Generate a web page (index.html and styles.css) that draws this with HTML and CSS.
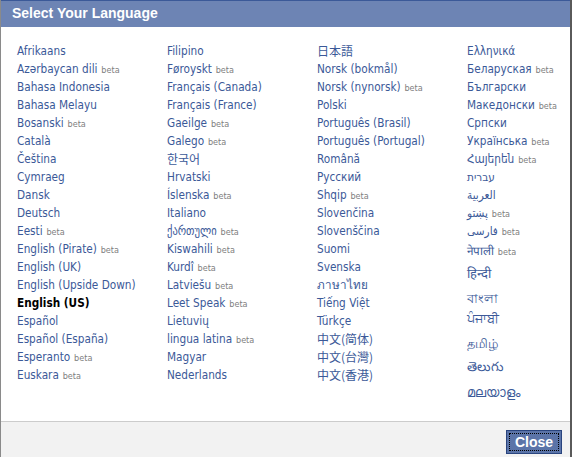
FILE: index.html
```html
<!DOCTYPE html>
<html lang="en">
<head>
    <meta charset="UTF-8">
    <title>Select Your Language</title>
    <link rel="stylesheet" href="styles.css">
</head>
<body>
    <div class="dialog">
        <div class="dialog-title">Select Your Language</div>

        <div class="dialog-body">
            <ul class="lang-col">
                <li><a href="#">Afrikaans</a></li>
                <li><a href="#">Azərbaycan dili</a> <span class="beta">beta</span></li>
                <li><a href="#">Bahasa Indonesia</a></li>
                <li><a href="#">Bahasa Melayu</a></li>
                <li><a href="#">Bosanski</a> <span class="beta">beta</span></li>
                <li><a href="#">Català</a></li>
                <li><a href="#">Čeština</a></li>
                <li><a href="#">Cymraeg</a></li>
                <li><a href="#">Dansk</a></li>
                <li><a href="#">Deutsch</a></li>
                <li><a href="#">Eesti</a> <span class="beta">beta</span></li>
                <li><a href="#">English (Pirate)</a> <span class="beta">beta</span></li>
                <li><a href="#">English (UK)</a></li>
                <li><a href="#">English (Upside Down)</a></li>
                <li class="current">English (US)</li>
                <li><a href="#">Español</a></li>
                <li><a href="#">Español (España)</a></li>
                <li><a href="#">Esperanto</a> <span class="beta">beta</span></li>
                <li><a href="#">Euskara</a> <span class="beta">beta</span></li>
            </ul>

            <ul class="lang-col">
                <li><a href="#">Filipino</a></li>
                <li><a href="#">Føroyskt</a> <span class="beta">beta</span></li>
                <li><a href="#">Français (Canada)</a></li>
                <li><a href="#">Français (France)</a></li>
                <li><a href="#">Gaeilge</a> <span class="beta">beta</span></li>
                <li><a href="#">Galego</a> <span class="beta">beta</span></li>
                <li><a href="#" class="cjk">한국어</a></li>
                <li><a href="#">Hrvatski</a></li>
                <li><a href="#">Íslenska</a> <span class="beta">beta</span></li>
                <li><a href="#">Italiano</a></li>
                <li><a href="#">ქართული</a> <span class="beta">beta</span></li>
                <li><a href="#">Kiswahili</a> <span class="beta">beta</span></li>
                <li><a href="#">Kurdî</a> <span class="beta">beta</span></li>
                <li><a href="#">Latviešu</a> <span class="beta">beta</span></li>
                <li><a href="#">Leet Speak</a> <span class="beta">beta</span></li>
                <li><a href="#">Lietuvių</a></li>
                <li><a href="#">lingua latina</a> <span class="beta">beta</span></li>
                <li><a href="#">Magyar</a></li>
                <li><a href="#">Nederlands</a></li>
            </ul>

            <ul class="lang-col">
                <li><a href="#" class="cjk">日本語</a></li>
                <li><a href="#">Norsk (bokmål)</a></li>
                <li><a href="#">Norsk (nynorsk)</a> <span class="beta">beta</span></li>
                <li><a href="#">Polski</a></li>
                <li><a href="#">Português (Brasil)</a></li>
                <li><a href="#">Português (Portugal)</a></li>
                <li><a href="#">Română</a></li>
                <li><a href="#">Русский</a></li>
                <li><a href="#">Shqip</a> <span class="beta">beta</span></li>
                <li><a href="#">Slovenčina</a></li>
                <li><a href="#">Slovenščina</a></li>
                <li><a href="#">Suomi</a></li>
                <li><a href="#">Svenska</a></li>
                <li><a href="#">ภาษาไทย</a></li>
                <li><a href="#">Tiếng Việt</a></li>
                <li><a href="#">Türkçe</a></li>
                <li><a href="#" class="cjk">中文(简体)</a></li>
                <li><a href="#" class="cjk">中文(台灣)</a></li>
                <li><a href="#" class="cjk">中文(香港)</a></li>
            </ul>

            <ul class="lang-col">
                <li><a href="#">Ελληνικά</a></li>
                <li><a href="#">Беларуская</a> <span class="beta">beta</span></li>
                <li><a href="#">Български</a></li>
                <li><a href="#">Македонски</a> <span class="beta">beta</span></li>
                <li><a href="#">Српски</a></li>
                <li><a href="#">Українська</a> <span class="beta">beta</span></li>
                <li><a href="#">Հայերեն</a> <span class="beta">beta</span></li>
                <li><a href="#">עברית</a></li>
                <li><a href="#">العربية</a></li>
                <li><a href="#">پښتو</a> <span class="beta">beta</span></li>
                <li><a href="#">فارسی</a> <span class="beta">beta</span></li>
                <!-- Indic scripts sit on taller lines -->
                <li class="gap-2"><a href="#">नेपाली</a> <span class="beta">beta</span></li>
                <li class="gap-5"><a href="#" class="indic">हिन्दी</a></li>
                <li class="gap-7"><a href="#" class="indic">বাংলা</a></li>
                <li class="gap-2"><a href="#" class="indic">ਪੰਜਾਬੀ</a></li>
                <li class="gap-7"><a href="#" class="indic">தமிழ்</a></li>
                <li class="gap-5"><a href="#" class="indic">తెలుగు</a></li>
                <li class="gap-8"><a href="#" class="indic">മലയാളം</a></li>
            </ul>
        </div>

        <div class="dialog-footer">
            <button class="btn-close" autofocus>Close</button>
        </div>
    </div>
</body>
</html>
```

FILE: styles.css
```css
* {
    margin: 0;
    padding: 0;
    box-sizing: border-box;
}

body {
    font-family: Tahoma, "DejaVu Sans", "Liberation Sans", sans-serif;
    font-size: 12px;
    color: #333;
    background: #fff;
    overflow: hidden;
}

.dialog {
    width: 572px;
    height: 457px;
    display: flex;
    flex-direction: column;
    border-left: 1px solid #8a8a8a;
    border-right: 2px solid #5a5a5a;
    background: #fff;
    overflow: hidden;
}

.dialog-title {
    height: 27px;
    background: #6d84b4;
    border-top: 1px solid #3b5998;
    color: #fff;
    font-family: "Liberation Sans", Arial, sans-serif;
    font-size: 14px;
    font-weight: bold;
    line-height: 25px;
    padding-left: 11px;
}

.dialog-body {
    flex: 1;
    display: grid;
    grid-template-columns: 150px 150px 150px 1fr;
    padding: 15px 0 0 16px;
}

.lang-col {
    list-style: none;
    min-width: 0;
}

.lang-col li {
    height: 18px;
    line-height: 18px;
    white-space: nowrap;
}

.lang-col a {
    color: #3b5998;
    text-decoration: none;
    font-family: "DejaVu Sans Condensed", "DejaVu Sans", sans-serif;
    font-size: 11.7px;
}

.lang-col a.cjk {
    font-family: "Noto Sans CJK JP", "Noto Sans CJK KR", sans-serif;
    font-size: 12px;
}

.lang-col a.indic {
    font-size: 13px;
}

.lang-col a:hover {
    text-decoration: underline;
}

.lang-col .current {
    font-family: "DejaVu Sans Condensed", "DejaVu Sans", sans-serif;
    font-size: 11.7px;
    font-weight: bold;
    color: #000;
}

.beta {
    color: #808080;
    font-family: "DejaVu Sans Condensed", "DejaVu Sans", sans-serif;
    font-size: 9px;
}

.lang-col li.gap-2 { margin-top: 2px; }
.lang-col li.gap-5 { margin-top: 5px; }
.lang-col li.gap-7 { margin-top: 7px; }
.lang-col li.gap-8 { margin-top: 8px; }

.dialog-footer {
    height: 36px;
    background: #f2f2f2;
    border-top: 1px solid #ccc;
    display: flex;
    justify-content: flex-end;
    align-items: flex-start;
    padding: 8px 8px 0 0;
}

.btn-close {
    width: 56px;
    height: 24px;
    background: #5b74a8;
    border: 1px solid #29447e;
    color: #fff;
    font-family: "Liberation Sans", Arial, sans-serif;
    font-size: 14px;
    font-weight: bold;
    cursor: pointer;
    outline: none;
    position: relative;
}

.btn-close::after {
    content: "";
    position: absolute;
    top: 2px;
    left: 2px;
    right: 2px;
    bottom: 2px;
    border: 1px dotted #000;
}
```
